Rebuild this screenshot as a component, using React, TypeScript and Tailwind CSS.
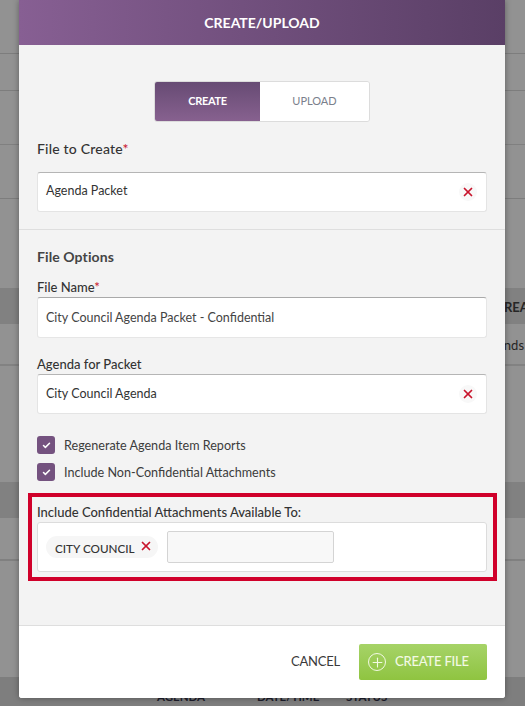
import { Check, Plus, X } from "lucide-react"

const backdropRows = [
  { h: "h-[54px]", cls: "border-b border-[#7d7d7d]" },
  { h: "h-[37px]", cls: "border-b border-[#7d7d7d]" },
  { h: "h-[54px]", cls: "border-b border-[#808080]" },
  { h: "h-[54px]", cls: "border-b border-[#7d7d7d]" },
  { h: "h-[89px]", cls: "" },
  { h: "h-[36px]", cls: "bg-[#818181]" },
  { h: "h-[42px]", cls: "border-b-2 border-[#828282]" },
  { h: "h-[116px]", cls: "" },
  { h: "h-[36px]", cls: "bg-[#818181]" },
  { h: "h-[43px]", cls: "border-b-2 border-[#808080]" },
  { h: "h-[116px]", cls: "" },
  { h: "h-[29px]", cls: "bg-[#7e7e7e]" },
]

function RemoveButton() {
  return (
    <span className="flex h-[18px] w-[18px] items-center justify-center rounded-full bg-[#f8f8f8]">
      <X size={14} strokeWidth={3} className="text-[#c8142c]" />
    </span>
  )
}

function SelectField({ value, offset }: { value: string; offset: string }) {
  return (
    <div className="flex h-[40px] items-center justify-between rounded-[3px] border border-[#e4e4e4] border-t-[#b5b5b5] bg-white pl-2 pr-[9px]">
      <span className={`${offset} text-[12.5px] text-[#333]`}>{value}</span>
      <RemoveButton />
    </div>
  )
}

function Checkbox({ label }: { label: string }) {
  return (
    <label className="flex h-[18px] items-center gap-[9px]">
      <span className="flex h-[18px] w-[18px] items-center justify-center rounded-[3px] bg-[#74527f]">
        <Check size={9} strokeWidth={4} className="text-white" />
      </span>
      <span className="pt-[2px] text-[12.6px] text-[#3c3c3c]">{label}</span>
    </label>
  )
}

export default function App() {
  return (
    <div className="relative h-[706px] w-[525px] overflow-hidden bg-[#929292] font-['Lato','Open_Sans',sans-serif]">
      <div className="flex flex-col">
        {backdropRows.map((row, i) => (
          <div key={i} className={`${row.h} ${row.cls}`} />
        ))}
      </div>

      <span className="absolute left-[504px] top-[298px] text-[13px] font-bold text-[#262626]">REA</span>
      <span className="absolute left-[497px] top-[336px] text-[13px] text-[#262626]">ends</span>
      <span className="absolute left-[157px] top-[688px] text-[11.5px] font-bold text-[#1d1d2b]">AGENDA</span>
      <span className="absolute left-[257px] top-[688px] text-[11.5px] font-bold text-[#1d1d2b]">DATE/TIME</span>
      <span className="absolute left-[346px] top-[688px] text-[11.5px] font-bold text-[#1d1d2b]">STATUS</span>

      <div className="absolute left-[19px] top-0 flex h-[698px] w-[486px] flex-col overflow-hidden rounded-b-[3px] bg-white shadow-[0_0_6px_rgba(0,0,0,0.35)]">
        <header className="flex h-[45px] shrink-0 items-center justify-center bg-gradient-to-r from-[#875f93] to-[#5a3f66] text-[14px] font-bold text-white">
          CREATE/UPLOAD
        </header>

        <main className="flex flex-1 flex-col border-b border-[#dedede] bg-[#f3f3f3] px-[18px]">
          <div className="mt-9 flex h-[41px] w-[216px] self-center overflow-hidden rounded-[3px] border border-[#dcdcdc] text-[11px]">
            <div className="flex w-[105px] items-center justify-center bg-gradient-to-b from-[#674b74] to-[#87618f] font-bold tracking-[-0.3px] text-white">
              CREATE
            </div>
            <div className="flex flex-1 items-center justify-center bg-white text-[#7b7f8c]">UPLOAD</div>
          </div>

          <h3 className="mt-[18px] text-[14px] font-medium leading-[17px] tracking-[0.2px] text-[#333]">
            File to Create<span className="text-[#c8142c]">*</span>
          </h3>
          <div className="mt-[15px]">
            <SelectField value="Agenda Packet" offset="pb-[2px]" />
          </div>

          <div className="-mx-[18px] mt-[17px] border-t border-[#dedede]" />

          <h3 className="mt-[18px] mb-[1px] text-[14px] font-bold leading-[17px] tracking-[0.1px] text-[#444]">File Options</h3>

          <label className="mt-[13px] text-[13px] font-medium leading-4 text-[#333]">
            File Name<span className="text-[#c8142c]">*</span>
          </label>
          <div className="mt-[2px] flex h-[41px] items-center rounded-[3px] border border-[#e6e6e6] border-t-[#a9a9a9] bg-white pl-2">
            <span className="pt-[2px] text-[12.5px] text-[#444]">City Council Agenda Packet - Confidential</span>
          </div>

          <label className="mt-[18px] text-[13px] font-medium leading-4 text-[#333]">Agenda for Packet</label>
          <div className="mt-[2px]">
            <SelectField value="City Council Agenda" offset="" />
          </div>

          <div className="mt-[22px] flex flex-col gap-[9px]">
            <Checkbox label="Regenerate Agenda Item Reports" />
            <Checkbox label="Include Non-Confidential Attachments" />
          </div>

          <section className="-ml-[9px] -mr-[10px] mt-[12px] h-[88px] border-4 border-[#d0002a] pl-[5px] pr-[6px] pt-[7px]">
            <label className="block text-[13px] font-medium leading-4 text-[#333]">
              Include Confidential Attachments Available To:
            </label>
            <div className="mt-[2px] flex h-[50px] items-center gap-[9px] rounded-[3px] border border-[#dcdcdc] bg-white pl-2">
              <span className="flex h-[22px] w-[112px] items-center gap-[4px] rounded-full bg-[#f6f6f6] pl-[9px] text-[11.7px] font-medium text-[#333]">
                <span className="pt-[3px]">CITY COUNCIL</span>
                <X size={14} strokeWidth={3} className="-mt-[2px] text-[#c8142c]" />
              </span>
              <div className="h-[32px] w-[167px] rounded-[2px] border border-[#d4d4d4] bg-[#f8f8f8]" />
            </div>
          </section>
        </main>

        <footer className="flex h-[72px] shrink-0 items-start justify-end gap-[19px] bg-white pr-[18px] pt-[18px]">
          <button className="flex h-[36px] items-center text-[13px] tracking-[-0.2px] text-[#3a3a3a]">CANCEL</button>
          <button className="flex h-[36px] w-[128px] items-center gap-[9px] rounded-[2px] bg-gradient-to-b from-[#a6d367] to-[#8fc440] pl-[9px] text-[13px] font-medium tracking-[-0.2px] text-[#f2f9e3]">
            <span className="flex h-[18px] w-[18px] items-center justify-center rounded-full border-[1.5px] border-[#f2f9e3]">
              <Plus size={15} strokeWidth={1.75} />
            </span>
            CREATE FILE
          </button>
        </footer>
      </div>
    </div>
  )
}
